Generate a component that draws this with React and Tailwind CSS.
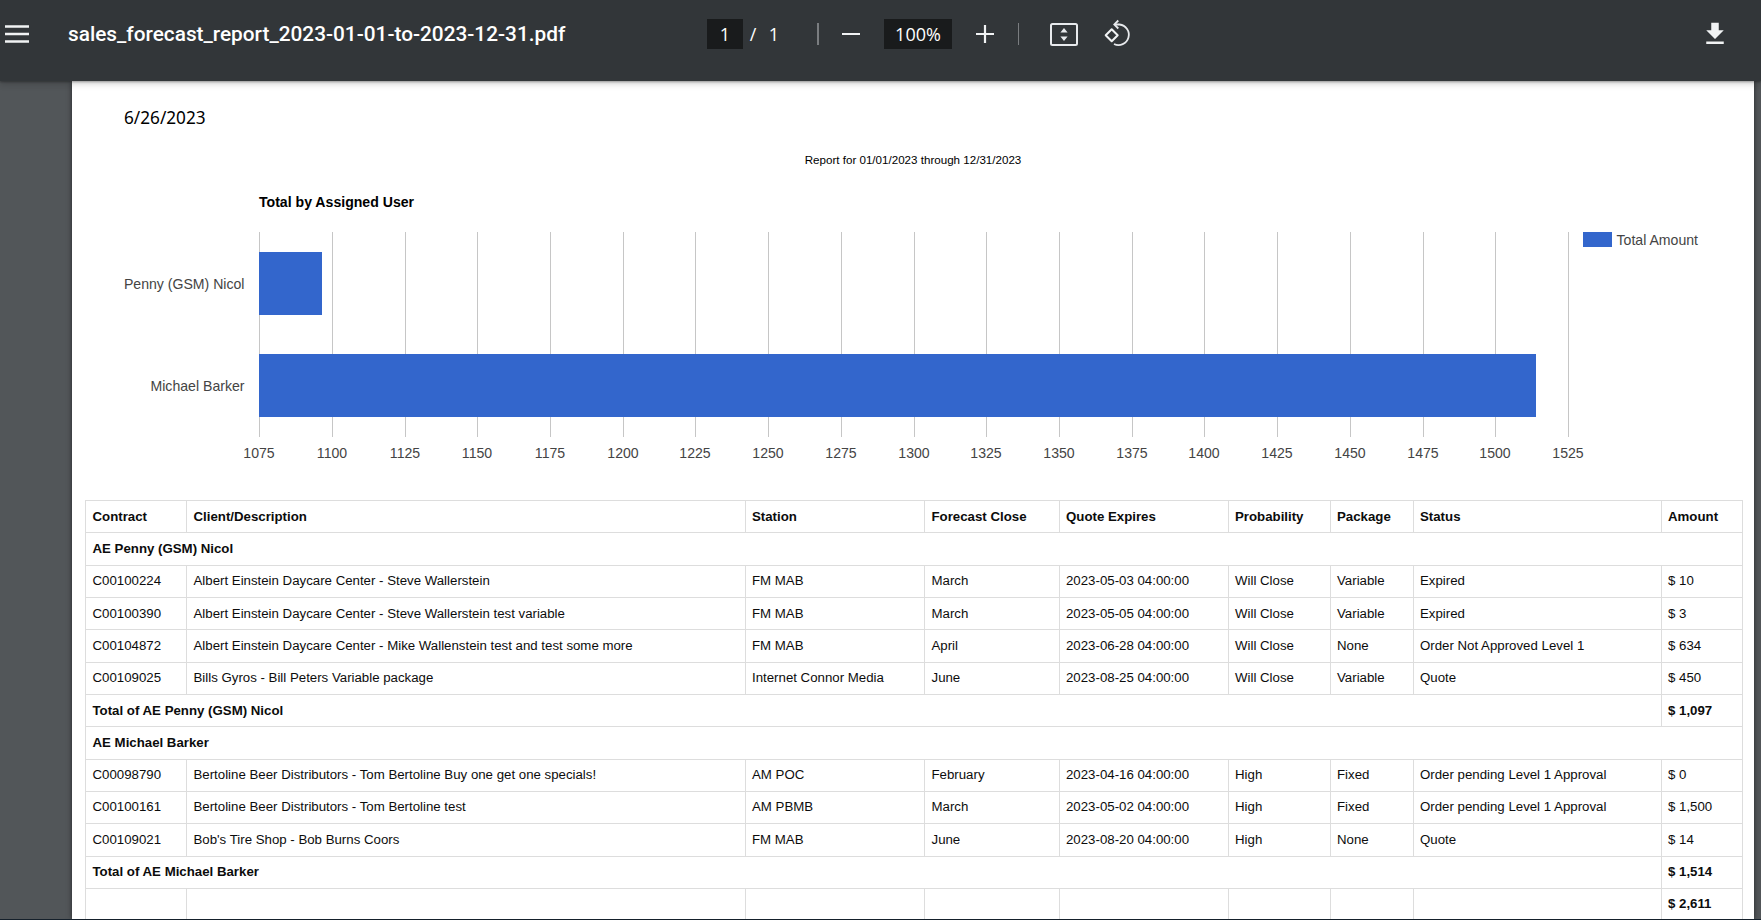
const widths = [101, 558.5, 179.5, 134.5, 169, 102, 83, 248, 81];
const head = ["Contract","Client/Description","Station","Forecast Close","Quote Expires","Probability","Package","Status","Amount"];
const rows = [
  { t: "g", v: "AE Penny (GSM) Nicol" },
  { c: ["C00100224","Albert Einstein Daycare Center - Steve Wallerstein","FM MAB","March","2023-05-03 04:00:00","Will Close","Variable","Expired","$ 10"] },
  { c: ["C00100390","Albert Einstein Daycare Center - Steve Wallerstein test variable","FM MAB","March","2023-05-05 04:00:00","Will Close","Variable","Expired","$ 3"] },
  { c: ["C00104872","Albert Einstein Daycare Center - Mike Wallenstein test and test some more","FM MAB","April","2023-06-28 04:00:00","Will Close","None","Order Not Approved Level 1","$ 634"] },
  { c: ["C00109025","Bills Gyros - Bill Peters Variable package","Internet Connor Media","June","2023-08-25 04:00:00","Will Close","Variable","Quote","$ 450"] },
  { t: "s", v: "Total of AE Penny (GSM) Nicol", a: "$ 1,097" },
  { t: "g", v: "AE Michael Barker" },
  { c: ["C00098790","Bertoline Beer Distributors - Tom Bertoline Buy one get one specials!","AM POC","February","2023-04-16 04:00:00","High","Fixed","Order pending Level 1 Approval","$ 0"] },
  { c: ["C00100161","Bertoline Beer Distributors - Tom Bertoline test","AM PBMB","March","2023-05-02 04:00:00","High","Fixed","Order pending Level 1 Approval","$ 1,500"] },
  { c: ["C00109021","Bob's Tire Shop - Bob Burns Coors","FM MAB","June","2023-08-20 04:00:00","High","None","Quote","$ 14"] },
  { t: "s", v: "Total of AE Michael Barker", a: "$ 1,514" },
  { c: ["","","","","","","","","$ 2,611"], bold: true },
];
const td = "border border-[#dddddd] h-[32.33px] pt-0 pb-[1px] pl-[6.5px] pr-0 align-middle whitespace-nowrap overflow-hidden";
const ticks = Array.from({ length: 19 }, (_, i) => 1075 + i * 25);

function Chart() {
  const gx = (i) => Math.floor(187.6 + i * 72.72) + 0.5;
  return (
    <svg width="1682" height="300" className="block" style={{ fontFamily: '"Liberation Sans", Arial, sans-serif' }}>
      <text x="187" y="17" fontSize="14.1" fontWeight="700" fill="#000000">Total by Assigned User</text>
      {ticks.map((t, i) => (
        <line key={t} x1={gx(i)} x2={gx(i)} y1="42" y2="247" stroke="#c6c6c6" strokeWidth="1" />
      ))}
      <rect x="187" y="62" width="63" height="63" fill="#3366cc" />
      <rect x="187" y="164" width="1277" height="63" fill="#3366cc" />
      <text x="172.5" y="99" textAnchor="end" fontSize="14.1" fill="#444444">Penny (GSM) Nicol</text>
      <text x="172.5" y="201" textAnchor="end" fontSize="14.1" fill="#444444">Michael Barker</text>
      {ticks.map((t, i) => (
        <text key={t} x={gx(i) - 0.5} y="268" textAnchor="middle" fontSize="14.1" fill="#444444">{t}</text>
      ))}
      <rect x="1511" y="42" width="29" height="15" fill="#3366cc" />
      <text x="1544.5" y="55" fontSize="14.1" fill="#444444">Total Amount</text>
    </svg>
  );
}

function Table() {
  return (
    <table className="ml-[13px] table-fixed w-[1657px] border-collapse text-[13.25px] leading-none text-[#0c0c0c]">
      <colgroup>
        {widths.map((w, i) => <col key={i} style={{ width: w }} />)}
      </colgroup>
      <thead>
        <tr>{head.map((h) => <th key={h} className={td + " text-left font-bold"}>{h}</th>)}</tr>
      </thead>
      <tbody>
        {rows.map((r, i) => {
          if (r.t === "g") return <tr key={i}><td colSpan={9} className={td + " font-bold"}>{r.v}</td></tr>;
          if (r.t === "s") return (
            <tr key={i}>
              <td colSpan={8} className={td + " font-bold"}>{r.v}</td>
              <td className={td + " font-bold"}>{r.a}</td>
            </tr>
          );
          return <tr key={i}>{r.c.map((v, j) => <td key={j} className={td + (r.bold ? " font-bold" : "")}>{v}</td>)}</tr>;
        })}
      </tbody>
    </table>
  );
}

export default function App() {
  return (
    <div className="flex h-[920px] w-full flex-col overflow-hidden bg-[#525659]" style={{ fontFamily: '"Liberation Sans", Arial, sans-serif' }}>
      <header className="relative z-10 flex h-[81px] shrink-0 items-center bg-[#323639] pb-[13px] text-white shadow-[0_1px_2px_rgba(0,0,0,0.3),0_2px_6px_rgba(0,0,0,0.15),0_4px_8px_rgba(0,0,0,0.06)]" style={{ fontFamily: 'Roboto, sans-serif' }}>
        <svg width="24" height="18" viewBox="0 0 24 18" className="ml-[5px] shrink-0">
          <path d="M0 1.5h24M0 9h24M0 16.5h24" stroke="#f1f3f4" strokeWidth="2.6" />
        </svg>
        <div className="ml-[39px] w-[639px] shrink-0 text-[20.8px] font-medium leading-none">sales_forecast_report_2023-01-01-to-2023-12-31.pdf</div>
        <div className="flex h-[30px] w-[36px] shrink-0 items-center justify-center bg-[#191b1c] text-[18px] leading-none" style={{ fontFamily: '"Open Sans", sans-serif' }}>1</div>
        <div className="ml-[5px] w-[10px] shrink-0 text-center text-[18px] leading-none" style={{ fontFamily: '"Open Sans", sans-serif' }}>/</div>
        <div className="ml-[9px] w-[14px] shrink-0 text-center text-[18px] leading-none" style={{ fontFamily: '"Open Sans", sans-serif' }}>1</div>
        <div className="ml-[36px] h-[22px] w-[2px] shrink-0 bg-[#7a7d80]" />
        <svg width="18" height="2" className="ml-[23px] shrink-0"><rect width="18" height="2.2" fill="#f1f3f4" /></svg>
        <div className="ml-[24px] flex h-[30px] w-[68px] shrink-0 items-center justify-center bg-[#191b1c] text-[18px] leading-none" style={{ fontFamily: '"Open Sans", sans-serif' }}>100%</div>
        <svg width="18" height="18" viewBox="0 0 18 18" className="ml-[24px] shrink-0">
          <path d="M0 9h18M9 0v18" stroke="#f1f3f4" strokeWidth="2.2" />
        </svg>
        <div className="ml-[24px] h-[22px] w-px shrink-0 bg-[#7a7d80]" />
        <svg width="28" height="23" viewBox="0 0 28 23" className="ml-[31px] shrink-0">
          <rect x="1" y="1" width="26" height="21" rx="1.5" fill="none" stroke="#e8eaed" strokeWidth="2" />
          <path d="M14 5l3.6 4.4h-7.2zM14 18l3.6-4.4h-7.2z" fill="#e8eaed" />
        </svg>
        <svg width="30" height="30" viewBox="0 0 30 30" className="ml-[25px] shrink-0">
          <path d="M8.7 10.2l6 6-6 6-6-6z" fill="none" stroke="#f1f3f4" strokeWidth="2" strokeLinejoin="round" />
          <path d="M12 5.5 H16.5 A10.3 10.3 0 1 1 11 25" fill="none" stroke="#e8eaed" strokeWidth="1.8" />
          <path d="M15.3 1.5l-4 4 4 4" fill="none" stroke="#e8eaed" strokeWidth="1.8" />
        </svg>
        <svg width="30" height="30" viewBox="0 0 24 24" className="ml-[567px] shrink-0">
          <path d="M19 9h-4V3H9v6H5l7 7 7-7zM5 18v2h14v-2H5z" fill="#f1f3f4" />
        </svg>
      </header>
      <main className="ml-[72px] mr-[7px] min-h-0 flex-1 overflow-hidden bg-white shadow-[0_0_5px_rgba(0,0,0,0.55)]">
        <div className="ml-[52px] mt-[25px] h-[24px] text-[17.2px] leading-[24px] text-black" style={{ fontFamily: '"Noto Sans", sans-serif' }}>6/26/2023</div>
        <div className="mt-[22px] h-[16px] text-center text-[11.6px] leading-[16px] text-black">Report for 01/01/2023 through 12/31/2023</div>
        <div className="mt-[22px] h-[310px]"><Chart /></div>
        <Table />
      </main>
      <div className="h-px shrink-0 bg-[#15202b]" />
    </div>
  );
}
